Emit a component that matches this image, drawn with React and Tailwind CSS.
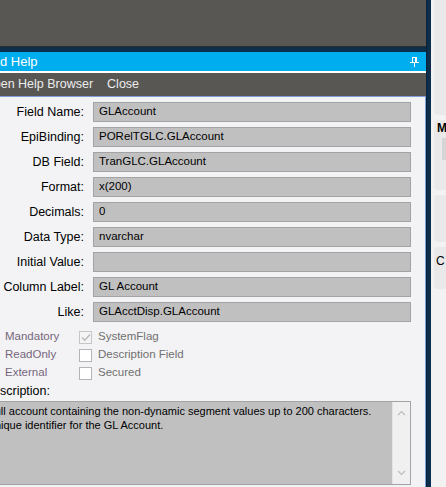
import React from 'react';

const fields = [
  { label: 'Field Name:', value: 'GLAccount' },
  { label: 'EpiBinding:', value: 'PORelTGLC.GLAccount' },
  { label: 'DB Field:', value: 'TranGLC.GLAccount' },
  { label: 'Format:', value: 'x(200)' },
  { label: 'Decimals:', value: '0' },
  { label: 'Data Type:', value: 'nvarchar' },
  { label: 'Initial Value:', value: '' },
  { label: 'Column Label:', value: 'GL Account' },
  { label: 'Like:', value: 'GLAcctDisp.GLAccount' },
];

const flags = [
  { left: 'Mandatory', right: 'SystemFlag', checked: true },
  { left: 'ReadOnly', right: 'Description Field', checked: false },
  { left: 'External', right: 'Secured', checked: false },
];

function PinIcon() {
  return (
    <svg width="9" height="10" viewBox="0 0 9 10" fill="none" stroke="white" strokeWidth="1" shapeRendering="crispEdges">
      <rect x="2.5" y="0.5" width="4" height="5" />
      <line x1="5.5" y1="0.5" x2="5.5" y2="5.5" />
      <line x1="0" y1="5.5" x2="9" y2="5.5" />
      <line x1="4.5" y1="5.5" x2="4.5" y2="10" />
    </svg>
  );
}

function Chevron({ down }) {
  return (
    <svg width="9" height="6" viewBox="0 0 9 6" fill="none" stroke="#bdbdbd" strokeWidth="1.2">
      {down ? <polyline points="1,1 4.5,4.5 8,1" /> : <polyline points="1,5 4.5,1.5 8,5" />}
    </svg>
  );
}

function CheckBox({ checked }) {
  return (
    <div className={`w-[13px] h-[13px] border flex items-center justify-center ${checked ? 'border-[#c6c6c6] bg-[#f4f4f4]' : 'border-[#b4b4b4] bg-white'}`}>
      {checked && (
        <svg width="10" height="9" viewBox="0 0 10 9" fill="none" stroke="#b8b8b8" strokeWidth="1.4">
          <polyline points="1,4.5 3.8,7.3 9,1.5" />
        </svg>
      )}
    </div>
  );
}

export default function App() {
  return (
    <div className="w-[446px] h-[487px] overflow-hidden flex bg-[#0d2e4a] font-['Liberation_Sans',Arial,sans-serif]">
      {/* left: main window + field help panel */}
      <div className="w-[426px] flex flex-col overflow-hidden">
        <div className="h-[47px] bg-[#595754] border-b border-[#2b2b2b]"></div>
        <div className="h-[5px] bg-[#0d2e4a]"></div>

        <div className="h-[19px] bg-[#00adef] flex items-center justify-between pr-[7px] text-white text-[13px]">
          <span className="-ml-[21px] whitespace-nowrap">Field Help</span>
          <PinIcon />
        </div>
        <div className="h-[2px] bg-white"></div>
        <div className="h-[23px] bg-[#595754] flex items-center gap-[14px] text-[12.5px] text-[#ececec] whitespace-nowrap">
          <span className="-ml-[16px]">Open Help Browser</span>
          <span>Close</span>
        </div>

        <div className="flex-1 bg-[#f3f3f5] border-t border-r border-[#7f9ed6] flex flex-col pt-[5px]">
          <div className="flex flex-col gap-[5px]">
            {fields.map((f) => (
              <div key={f.label} className="flex items-center h-[20px]">
                <div className="w-[84px] text-right text-[12.5px] text-black whitespace-nowrap">{f.label}</div>
                <div className="ml-[9px] w-[318px] h-[20px] bg-[#c0c0c0] border border-[#a3a3a3] pl-[5px] flex items-center text-[11.5px] text-black whitespace-nowrap">
                  {f.value}
                </div>
              </div>
            ))}
          </div>

          <div className="mt-[6px] flex flex-col">
            {flags.map((f) => (
              <div key={f.left} className="h-[18px] flex items-center">
                <div className="w-[79px] pl-[5px] text-[11.5px] text-[#76667c]">{f.left}</div>
                <CheckBox checked={f.checked} />
                <div className="ml-[6px] text-[11.5px] text-[#707070] whitespace-nowrap">{f.right}</div>
              </div>
            ))}
          </div>

          <div className="h-[18px] flex items-center text-[12.5px] text-black whitespace-nowrap">
            <span className="-ml-[16px]">Description:</span>
          </div>

          <div className="mt-[1px] h-[84px] w-[412px] -ml-[1px] flex border border-[#a3a3a3] bg-[#c0c0c0]">
            <div className="flex-1 pt-[2px] text-[11px] leading-[14px] text-black whitespace-nowrap overflow-hidden">
              <div className="-ml-[12px]">Full account containing the non-dynamic segment values up to 200 characters.</div>
              <div className="-ml-[13px]">Unique identifier for the GL Account.</div>
            </div>
            <div className="w-[18px] bg-[#f0f0f0] border-l border-[#e4e4e4] flex flex-col items-center justify-between py-[8px]">
              <Chevron />
              <Chevron down />
            </div>
          </div>
        </div>
      </div>

      {/* navy splitter */}
      <div className="w-[5px] bg-[#0d2e4a] border-l border-[#08223a]"></div>

      {/* right: neighbouring panels */}
      <div className="flex-1 bg-[#f2f2f2] pl-[3px] flex flex-col gap-[5px] overflow-hidden">
        <div className="h-[115px] bg-[#e9e9e9] rounded-bl-[4px]"></div>
        <div className="h-[70px] bg-[#e9e9e9] rounded-l-[4px] pt-[1px] pl-[3px] flex flex-col">
          <span className="text-[12px] font-bold text-black leading-[14px]">M</span>
          <div className="mt-[3px] ml-[5px] h-[22px] bg-[#d5d5d5]"></div>
        </div>
        <div className="h-[47px] bg-[#e9e9e9] rounded-l-[4px]"></div>
        <div className="h-[42px] bg-[#e9e9e9] rounded-l-[4px] pt-[1px] pl-[2px]">
          <span className="text-[12px] text-black leading-[14px]">C</span>
        </div>
      </div>
    </div>
  );
}
